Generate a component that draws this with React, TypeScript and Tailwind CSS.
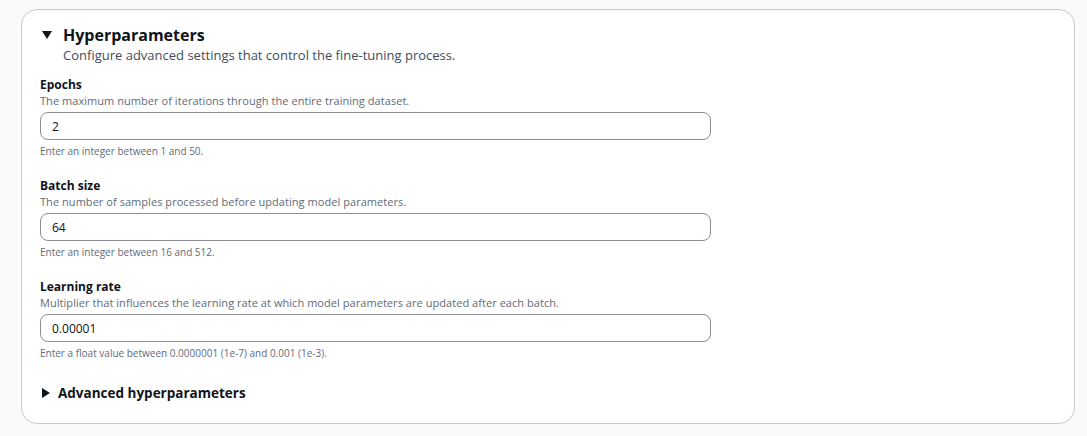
import { useState } from "react";

const fields = [
  {
    label: "Epochs",
    desc: "The maximum number of iterations through the entire training dataset.",
    value: "2",
    hint: "Enter an integer between 1 and 50.",
  },
  {
    label: "Batch size",
    desc: "The number of samples processed before updating model parameters.",
    value: "64",
    hint: "Enter an integer between 16 and 512.",
  },
  {
    label: "Learning rate",
    desc: "Multiplier that influences the learning rate at which model parameters are updated after each batch.",
    value: "0.00001",
    hint: "Enter a float value between 0.0000001 (1e-7) and 0.001 (1e-3).",
  },
];

function Field({ label, desc, value, hint }: (typeof fields)[number]) {
  const [v, setV] = useState(value);
  return (
    <div className="flex flex-col">
      <label className="text-[12px] font-bold leading-[16px] text-[#0f141a]">
        {label}
      </label>
      <p className="mt-[1px] text-[11px] leading-[14px] tracking-[0.05px] text-[#5f6b7a]">
        {desc}
      </p>
      <input
        value={v}
        onChange={(e) => setV(e.target.value)}
        className="mt-[4px] h-[28px] w-[671px] rounded-[8px] border border-[#8c8c94] bg-white px-[11px] text-[12px] text-[#0f141a] outline-none"
      />
      <p className="mt-[4px] text-[10px] leading-[14px] text-[#5f6b7a]">{hint}</p>
    </div>
  );
}

export default function App() {
  return (
    <div
      className="min-h-[436px] bg-[#fafafa] pl-[21px] pr-[12px] pt-[9px]"
      style={{ fontFamily: '"Open Sans", "Noto Sans", sans-serif' }}
    >
      <div className="h-[415px] rounded-[16px] border border-[#c6c6cd] bg-white pl-[18px] pr-[20px] pt-[15px]">
        <div className="flex items-start">
          <span className="mt-[5px] ml-[2px] mr-[11px] flex h-[10px] w-[10px] items-center justify-center">
            <svg width="10" height="8" viewBox="0 0 10 8">
              <polygon points="0,0 10,0 5,8" fill="#0f141a" />
            </svg>
          </span>
          <div>
            <h2 className="text-[16px] font-bold leading-[20px] text-[#0f141a]">
              Hyperparameters
            </h2>
            <p className="mt-[2px] text-[13px] leading-[17px] text-[#414d5c]">
              Configure advanced settings that control the fine-tuning process.
            </p>
          </div>
        </div>

        <div className="mt-[13px] flex flex-col gap-[20px]">
          {fields.map((f) => (
            <Field key={f.label} {...f} />
          ))}
        </div>

        <div className="mt-[24px] flex items-center">
          <svg width="8" height="10" viewBox="0 0 8 10" className="ml-[2px] mr-[8px]">
            <polygon points="0,0 8,5 0,10" fill="#0f141a" />
          </svg>
          <span className="text-[13.5px] font-bold leading-[18px] text-[#0f141a]">
            Advanced hyperparameters
          </span>
        </div>
      </div>
    </div>
  );
}
